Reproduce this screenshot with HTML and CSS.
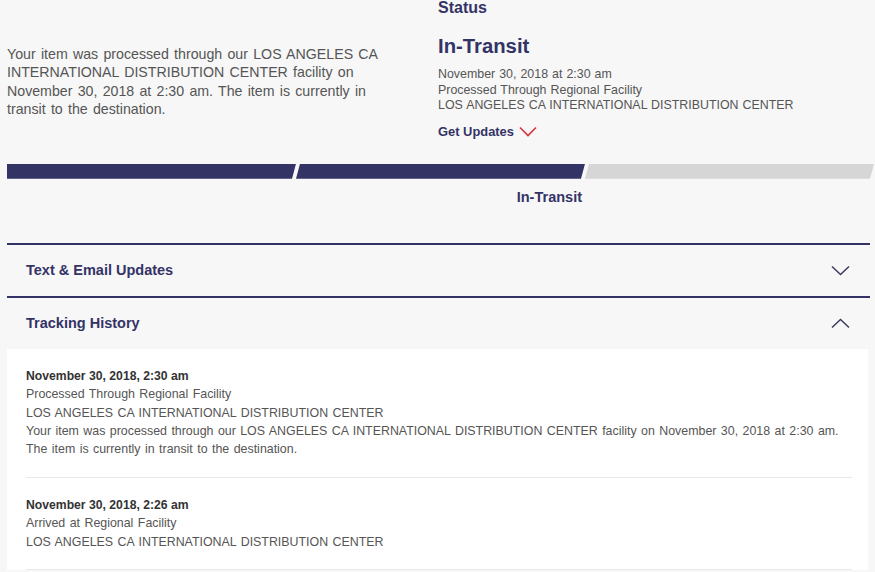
FILE: index.html
```html
<!DOCTYPE html>
<html lang="en">
<head>
<meta charset="utf-8">
<title>Tracking</title>
<link rel="stylesheet" href="styles.css">
</head>
<body>
<div class="page">
  <section class="summary">
    <p class="summary-text">Your item was processed through our LOS ANGELES CA INTERNATIONAL DISTRIBUTION CENTER facility on November 30, 2018 at 2:30 am. The item is currently in transit to the destination.</p>
    <div class="status">
      <div class="status-label">Status</div>
      <div class="status-value">In-Transit</div>
      <div class="status-details">
        <div>November 30, 2018 at 2:30 am</div>
        <div>Processed Through Regional Facility</div>
        <div>LOS ANGELES CA INTERNATIONAL DISTRIBUTION CENTER</div>
      </div>
      <div class="get-updates">Get Updates
        <svg class="chev-red" width="18" height="11" viewBox="0 0 18 11"><path d="M1 1.5 L9 9.5 L17 1.5" fill="none" stroke="#d8303f" stroke-width="1.6"/></svg>
      </div>
    </div>
  </section>

  <section class="progress">
    <div class="bar">
      <div class="seg seg-first done"></div>
      <div class="seg done"></div>
      <div class="seg todo"></div>
    </div>
    <div class="bar-labels">
      <span></span>
      <span class="bar-label">In-Transit</span>
      <span></span>
    </div>
  </section>

  <section class="accordion">
    <div class="acc-head">
      <span class="acc-title">Text &amp; Email Updates</span>
      <svg width="19" height="11" viewBox="0 0 19 11"><path d="M1 1.5 L9.5 9.5 L18 1.5" fill="none" stroke="#3b3b5c" stroke-width="1.5"/></svg>
    </div>
    <div class="acc-head">
      <span class="acc-title">Tracking History</span>
      <svg width="19" height="11" viewBox="0 0 19 11"><path d="M1 9.5 L9.5 1.5 L18 9.5" fill="none" stroke="#3b3b5c" stroke-width="1.5"/></svg>
    </div>
    <div class="history">
      <div class="event">
        <div class="event-date">November 30, 2018, 2:30 am</div>
        <div>Processed Through Regional Facility</div>
        <div>LOS ANGELES CA INTERNATIONAL DISTRIBUTION CENTER</div>
        <div>Your item was processed through our LOS ANGELES CA INTERNATIONAL DISTRIBUTION CENTER facility on November 30, 2018 at 2:30 am. The item is currently in transit to the destination.</div>
      </div>
      <div class="event">
        <div class="event-date">November 30, 2018, 2:26 am</div>
        <div>Arrived at Regional Facility</div>
        <div>LOS ANGELES CA INTERNATIONAL DISTRIBUTION CENTER</div>
      </div>
    </div>
  </section>
</div>
</body>
</html>
```

FILE: styles.css
```css
* { box-sizing: border-box; }
html, body { margin: 0; padding: 0; }
body {
  background: #f7f7f7;
  font-family: "Liberation Sans", Arial, sans-serif;
  color: #555;
  overflow: hidden;
}
.page {
  padding: 0 5px 0 7px;
}
.summary {
  display: grid;
  grid-template-columns: 400px 1fr;
  column-gap: 31px;
}
.summary-text {
  margin: 0;
  padding-top: 45px;
  font-size: 14.2px;
  word-spacing: 1.3px;
  line-height: 18.4px;
  color: #555;
}
.status-label {
  font-size: 16px;
  line-height: 16px;
  font-weight: bold;
  color: #333366;
}
.status-value {
  margin-top: 18px;
  font-size: 20.3px;
  line-height: 24px;
  font-weight: bold;
  color: #333366;
}
.status-details {
  margin-top: 9px;
  font-size: 12.4px;
  line-height: 15.6px;
  word-spacing: 0.6px;
  color: #555;
}
.get-updates {
  margin-top: 10px;
  display: flex;
  align-items: center;
  gap: 5px;
  font-size: 12.9px;
  line-height: 16px;
  font-weight: bold;
  color: #333366;
}
.chev-red { display: block; }

.progress { margin-top: 24px; }
.bar {
  display: flex;
  height: 15px;
  margin-right: -4px;
}
.seg {
  flex: 1;
  clip-path: polygon(4px 0, 100% 0, calc(100% - 4px) 100%, 0 100%);
}
.seg-first {
  clip-path: polygon(0 0, 100% 0, calc(100% - 4px) 100%, 0 100%);
}
.done { background: #333366; }
.todo { background: #d6d6d6; }
.bar-labels {
  display: grid;
  grid-template-columns: 1fr 1fr 1fr;
  margin-top: 9px;
  margin-right: -4px;
}
.bar-label {
  text-align: right;
  font-size: 14.5px;
  line-height: 18px;
  font-weight: bold;
  color: #333366;
  padding-right: 3px;
}

.accordion { margin-top: 37px; }
.acc-head {
  border-top: 2px solid #333366;
  height: 53px;
  display: flex;
  align-items: center;
  justify-content: space-between;
  padding: 0 20px 0 19px;
}
.acc-title {
  font-size: 14.5px;
  font-weight: bold;
  color: #333366;
}
.acc-head svg { display: block; }

.history {
  background: #fff;
  padding: 0 16px 0 19px;
  margin-right: 2px;
}
.event {
  padding: 18px 0 18px;
  border-bottom: 1px solid #e8e8e8;
  font-size: 12.4px;
  line-height: 18.4px;
  word-spacing: 1px;
  color: #555;
}
.event-date {
  font-weight: bold;
  font-size: 12.2px;
  word-spacing: 0;
  color: #333;
}
```
